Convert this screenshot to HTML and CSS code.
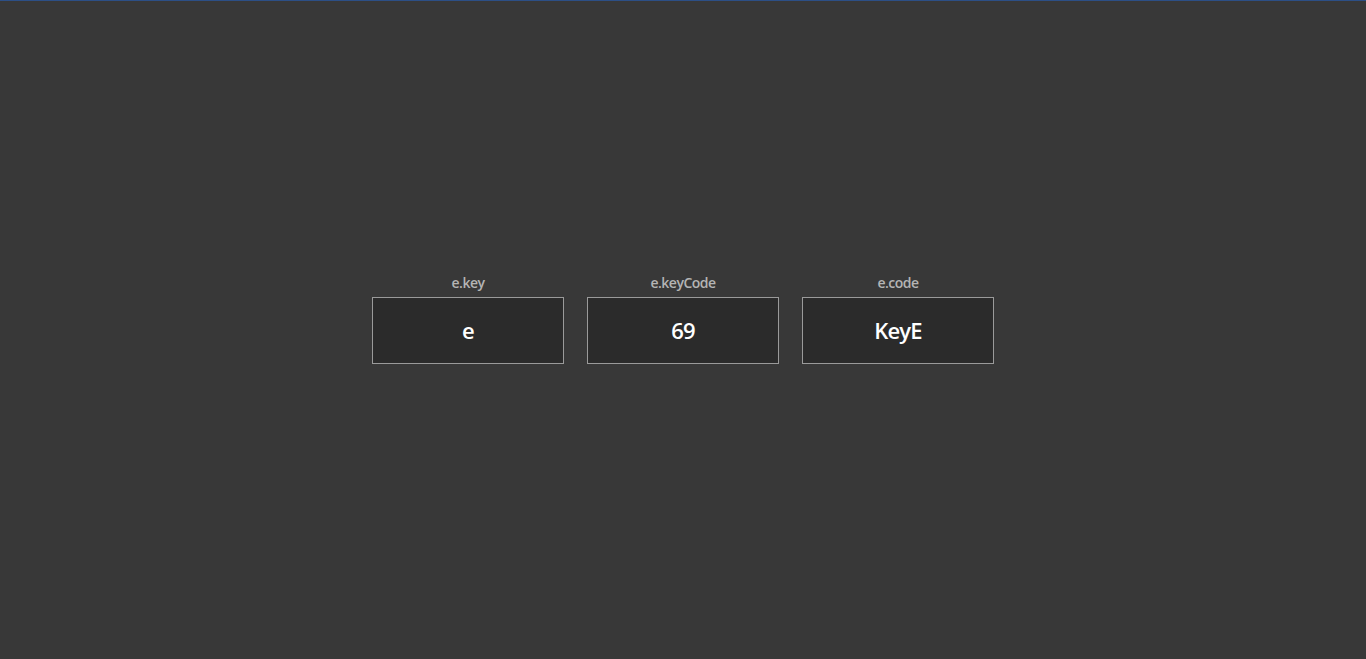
FILE: index.html
```html
<!DOCTYPE html>
<html>
<head>
<meta charset="utf-8">
<link rel="stylesheet" href="styles.css">
</head>
<body>
<div class="topline"></div>
<main class="stage">
  <div class="row">
    <div class="item">
      <div class="label">e.key</div>
      <div class="box">e</div>
    </div>
    <div class="item">
      <div class="label">e.keyCode</div>
      <div class="box">69</div>
    </div>
    <div class="item">
      <div class="label">e.code</div>
      <div class="box">KeyE</div>
    </div>
  </div>
</main>
</body>
</html>
```
FILE: styles.css
```css
html, body {
  margin: 0;
  padding: 0;
  height: 100%;
}
body {
  background: #383838;
  font-family: "Open Sans", "Noto Sans", sans-serif;
  display: flex;
  flex-direction: column;
}
.topline {
  height: 1px;
  background: #2c4f86;
  flex: none;
}
.stage {
  flex: 1;
  display: flex;
  align-items: center;
  justify-content: center;
}
.row {
  display: flex;
  gap: 23px;
  margin-bottom: 24px;
}
.item {
  display: flex;
  flex-direction: column;
  align-items: center;
}
.label {
  color: #b4b4b4;
  font-size: 14px;
  font-weight: 600;
  letter-spacing: -0.5px;
  line-height: 19px;
  margin-bottom: 5px;
}
.box {
  width: 190px;
  height: 65px;
  border: 1px solid #9a9a9a;
  background: #2b2b2b;
  color: #ffffff;
  font-size: 22px;
  font-weight: 600;
  letter-spacing: -0.8px;
  display: flex;
  align-items: center;
  justify-content: center;
}
```
